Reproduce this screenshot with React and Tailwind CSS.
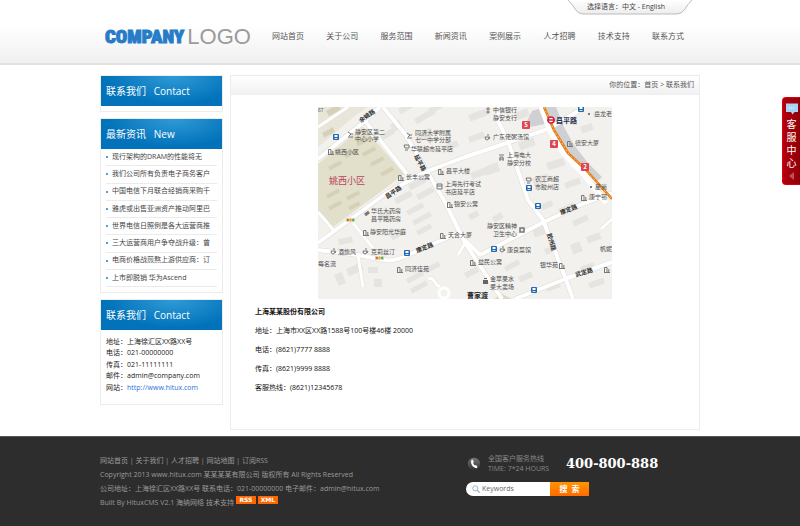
import React from "react";

const NAV = ["网站首页", "关于公司", "服务范围", "新闻资讯", "案例展示", "人才招聘", "技术支持", "联系方式"];

const NEWS = [
  "现行架构的DRAM的性能将无",
  "我们公司所有负责电子商务客户",
  "中国电信下月联合经销商采购千",
  "雅虎或出售亚洲资产推动阿里巴",
  "世界电信日照例是各大运营商推",
  "三大运营商用户争夺战升级：曾",
  "电商价格战煎熬上游供应商：订",
  "上市即脱销 华为Ascend",
];

const ROADS = [
  "M0 52L47 14L62 0",
  "M65 0L87 27L127 95L147 136L184 192",
  "M47 14L89 67",
  "M0 136L59 93L67 87L107 65L147 50L230 22L262 3",
  "M180 0V14L190 34L210 93L225 113L247 170L255 192",
  "M0 143L40 148L66 153Q76 155 90 148L140 126",
  "M162 148L224 116L262 98L294 86",
  "M197 192L247 172L294 155",
  "M140 126L162 148",
];

const LANES = [
  "M35 116L55 141",
  "M40 148L45 180",
  "M0 105L17 125",
  "M110 172Q114 170 116 174T122 180",
  "M147 136L140 148",
  "M0 20L30 0",
  "M250 47L294 92",
  "M283 122L294 112",
];

/* x, y, width, height, rotation */
const BLOCKS = [
  [80, 2, 20, 6, -30], [96, 12, 22, 6, -30], [110, 2, 18, 6, -30], [62, 28, 14, 6, -30],
  [98, 28, 16, 8, -28], [72, 18, 10, 8, -30], [124, 40, 16, 6, -25], [150, 8, 18, 7, -20],
  [150, 30, 16, 6, -20], [196, 6, 14, 8, -20], [166, 60, 14, 9, -20], [200, 36, 16, 8, -20],
  [228, 56, 18, 8, -18], [214, 72, 16, 8, -20], [246, 76, 16, 6, -20], [262, 20, 12, 7, -20],
  [90, 78, 18, 6, -28], [98, 88, 18, 6, -28], [76, 92, 18, 6, -28], [152, 66, 16, 7, -20],
  [60, 108, 12, 6, -28], [88, 104, 18, 5, -28], [94, 114, 20, 5, -28], [98, 124, 16, 5, -28],
  [72, 128, 16, 6, -28], [20, 132, 14, 6, -10], [16, 168, 8, 12, -24], [28, 162, 16, 8, -24],
  [50, 160, 10, 6, 0], [56, 172, 8, 8, 0], [88, 172, 18, 5, -28], [106, 162, 16, 5, -28],
  [92, 182, 18, 5, -28], [150, 108, 10, 6, -28], [146, 166, 14, 6, -28], [186, 160, 16, 5, -28],
  [214, 122, 14, 9, -20], [240, 102, 16, 6, -24], [254, 114, 16, 6, -24], [252, 138, 10, 10, -20],
  [226, 142, 12, 6, -20], [222, 98, 12, 6, -24], [268, 130, 14, 7, -20], [262, 160, 14, 5, -20],
  [228, 180, 14, 5, -20], [270, 176, 16, 6, -20], [200, 170, 14, 6, -24], [174, 110, 10, 6, -28],
];

const ESTATES = [
  [10, 60, 14, 4], [26, 48, 14, 4], [38, 36, 12, 4], [44, 46, 14, 4], [52, 56, 14, 4],
  [8, 88, 14, 4], [28, 90, 14, 4], [62, 66, 14, 4], [10, 100, 14, 4], [30, 100, 12, 4], [8, 4, 14, 6], [4, 26, 12, 5],
];

const PLACES = [
  [37, 27, "静安区第二"], [37, 34, "中心小学"], [17, 47, "姚西小区"],
  [97, 28, "同济大学附属"], [97, 35, "七一中学分部"], [93, 44, "华联超市延平店"],
  [88, 72, "长丰公寓"], [128, 66, "昌平大楼"], [127, 79, "上海先行考试"], [127, 87, "书店延平店"],
  [175, 5, "中信银行"], [175, 13, "静安支行"], [175, 32, "广东佬粥汤馆"],
  [189, 50, "上海电大"], [189, 58, "静安分校"], [257, 38, "德安大厦"],
  [217, 74, "农工商超"], [217, 82, "市胶州店"], [276, 9, "岳龙老"], [277, 82, "星尚"], [271, 92, "康宁邨"],
  [53, 106, "华氏大药房"], [53, 114, "昌平路药房"], [52, 127, "静安阳光华庭"],
  [136, 99, "锦安公寓"], [130, 130, "天合大厦"], [20, 147, "酒旗风"], [53, 147, "克莉丝汀"],
  [87, 164, "同济佳苑"], [0, 159, "每名流"], [169, 121, "静安区精神"], [175, 129, "卫生中心"],
  [189, 145, "康良菜馆"], [160, 157, "益民公寓"], [222, 160, "银华苑"],
  [172, 174, "金苹果水"], [172, 182, "果大卖场"], [282, 144, "帆妮"],
];

const STREETS = [
  [43, 16, -36, "余姚路"], [69, 92, -34, "昌平路"], [99, 146, -22, "康定路"],
  [243, 108, -22, "康定路"], [258, 170, -17, "武定路"], [96, 49, 62, "延平路"], [229, 127, 74, "胶州路"],
];

const BUILDINGS = [
  [10, 43], [80, 69], [120, 63], [249, 35], [263, 89], [45, 124], [122, 127], [79, 161],
  [129, 96], [152, 154], [241, 157], [286, 161],
];
const SCHOOLS = [[30, 27], [89, 28]];
const CAFES = [[167, 30], [13, 144], [45, 144], [182, 142]];
const STOPS = [[15, 28], [260, 0], [208, 79], [217, 97], [86, 144], [173, 140], [213, 181]];
const EXITS = [[204, 15, "5"], [232, 34, "4"], [263, 57, "2"]];
const LIGHTS = [[28, 111], [57, 149]];

function CityMap() {
  return (
    <svg
      viewBox="0 0 294 192"
      className="mx-auto block w-[294px] max-w-full font-['Noto_Sans_CJK_SC',sans-serif]"
      role="img"
      aria-label="地图"
    >
      <rect width="294" height="192" fill="#f2f1ee" />
      <path d="M0 57L45 20L86 67L57 89L15 120L0 105Z" fill="#e2dfca" />
      <path d="M0 0H50L38 8L0 40Z" fill="#e8e6d8" />
      <path d="M176 192L184 187L194 192Z" fill="#ddd8bf" />
      {ESTATES.map(([x, y, w, h], i) => (
        <rect key={i} x={x} y={y} width={w} height={h} fill="#d5d1b8" transform={`rotate(-28 ${x} ${y})`} />
      ))}
      {BLOCKS.map(([x, y, w, h, r], i) => (
        <rect key={i} x={x} y={y} width={w} height={h} fill="#e5e4e1" transform={`rotate(${r} ${x} ${y})`} />
      ))}
      <path d="M208 16L214 4L226 0H238L246 20L256 38L270 56L284 70L274 79L260 62L246 42L232 16L212 20Z" fill="#cfd0d4" />
      <g fill="none" strokeLinejoin="round">
        {ROADS.map((d) => <path key={d} d={d} stroke="#dcdad6" strokeWidth="5" />)}
        {LANES.map((d) => <path key={d} d={d} stroke="#e2e0dc" strokeWidth="4" />)}
        {ROADS.map((d) => <path key={d} d={d} stroke="#fff" strokeWidth="4" />)}
        {LANES.map((d) => <path key={d} d={d} stroke="#fff" strokeWidth="3" />)}
        <circle cx="126" cy="186" r="5" stroke="#fff" strokeWidth="3" />
        <path d="M223 0L232 24L245 46L266 68L288 96" stroke="#fff" strokeWidth="5" />
        <path d="M226 0L236 23L250 46L268 63L294 92" stroke="#e87d16" strokeWidth="2.6" />
        <path d="M226 0L236 23L250 46L268 63L294 92" stroke="#f8c07c" strokeWidth="1" strokeDasharray="2 2" />
      </g>

      <g stroke="#777" fill="none" strokeWidth="1">
        {BUILDINGS.map(([x, y], i) => (
          <path key={i} d={`M${x + 0.5} ${y + 4.5}V${y - 0.5}H${x + 3}V${y + 4.5}M${x} ${y + 4.5}H${x + 6}M${x + 4.8} ${y + 1}V${y + 4}`} />
        ))}
        {SCHOOLS.map(([x, y], i) => (
          <path key={i} d={`M${x} ${y + 3}H${x + 5}M${x} ${y - 2}L${x + 3} ${y}L${x + 1} ${y + 2}M${x + 3} ${y}H${x + 5}`} />
        ))}
        {CAFES.map(([x, y], i) => (
          <path key={i} d={`M${x} ${y}H${x + 4}Q${x + 4} ${y + 3} ${x + 2} ${y + 3}T${x} ${y}M${x + 4} ${y}Q${x + 6} ${y} ${x + 4} ${y + 2}M${x + 2} ${y - 2}L${x + 4} ${y - 2}`} />
        ))}
        <path d="M86 38H91V41H87ZM87 43H90M208 71H213V74H209ZM209 76H212" />
        <path d="M119 77H124V82H119ZM119 79H124M168 2H172M170 0V7M168 5H172" />
        <path d="M181 48H186M182 54V50H185V54M181 52H186" />
        <path d="M47 108L51 105" strokeWidth="3" />
        <rect x="202" y="121" width="4" height="4" strokeWidth="1.5" />
      </g>
      <path d="M165 173H170V177H165ZM166 171H169V172H166Z" fill="#666" />
      <circle cx="271" cy="7" r="1" fill="#555" />
      <circle cx="273" cy="80" r="1" fill="#555" />

      <g fontSize="6" fill="#4c4c4c">
        {PLACES.map(([x, y, t]) => <text key={t} x={x} y={y}>{t}</text>)}
      </g>
      <g fontSize="6" fontWeight="700" fill="#2d2d2d">
        {STREETS.map(([x, y, r, t]) => (
          <text key={`${x}-${y}`} x={x} y={y} transform={`rotate(${r} ${x} ${y})`}>{t}</text>
        ))}
      </g>
      <text x="149" y="191" fontSize="7" fontWeight="700" fill="#222">曹家渡</text>
      <text x="11" y="77" fontSize="9" fill="#b8445a">姚西小区</text>
      <text x="238" y="16" fontSize="7" fontWeight="700" fill="#27304e">昌平路</text>
      <text x="0" y="5" fontSize="5" fill="#555">67</text>

      <circle cx="233" cy="13" r="3" fill="#fff" stroke="#d0213f" strokeWidth="1.5" />
      <path d="M229 13H237" stroke="#d0213f" strokeWidth="1.5" />
      {STOPS.map(([x, y], i) => (
        <g key={i}>
          <rect x={x} y={y - 1} width="6" height="6" rx="1" fill="#2468ae" />
          <rect x={x + 1.5} y={y} width="3" height="2" fill="#fff" />
          <rect x={x + 1.5} y={y + 3} width="3" height="1" fill="#cfe2f5" />
        </g>
      ))}
      {EXITS.map(([x, y, n]) => (
        <g key={n}>
          <rect x={x} y={y - 1} width="8" height="8" rx="1" fill="#dd4550" />
          <text x={x + 4} y={y + 5} textAnchor="middle" fontSize="6" fontWeight="700" fill="#fff">{n}</text>
        </g>
      ))}
      {LIGHTS.map(([x, y], i) => (
        <g key={i}>
          <rect x={x} y={y} width="9" height="4" fill="#dfe0c0" />
          <circle cx={x + 1.8} cy={y + 2} r="1.2" fill="#e4593f" />
          <circle cx={x + 4.5} cy={y + 2} r="1.2" fill="#eaa72e" />
          <circle cx={x + 7.2} cy={y + 2} r="1.2" fill="#59a846" />
        </g>
      ))}
    </svg>
  );
}

function Panel({ title, children }) {
  return (
    <section className="border border-[#ececec] bg-white">
      <h2 className="h-[30px] whitespace-pre bg-[#0273bb] bg-[radial-gradient(ellipse_at_60%_0%,#2f9ad6_0%,#0273bb_65%)] px-[5px] text-[10px] leading-[30px] text-white">
        {title}
      </h2>
      {children}
    </section>
  );
}

function Header() {
  return (
    <header className="border-b-2 border-[#e2e2e2] bg-linear-to-b from-white from-40% to-[#f0f0f0] pb-[7px]">
      <div className="mx-auto w-3/4">
        <div className="flex h-4 justify-end pr-2">
          <div className="relative w-[124px] pr-2 text-center leading-[14px] text-[#444]">
            <svg className="absolute inset-0 h-4 w-full" viewBox="0 0 124 16" aria-hidden="true">
              <defs>
                <linearGradient id="tab" x1="0" y1="0" x2="0" y2="1">
                  <stop offset="0" stopColor="#fff" />
                  <stop offset="1" stopColor="#ededed" />
                </linearGradient>
              </defs>
              <path d="M0 0Q5 5 7 9Q10 14 15 14H109Q114 14 117 9Q119 5 124 0" fill="url(#tab)" stroke="#bcbcbc" />
            </svg>
            <span className="relative">
              选择语言：<a href="#zh">中文</a> - <a href="#en">English</a>
            </span>
          </div>
        </div>
        <div className="flex h-10 items-center">
          <a href="#home" className="flex w-[172px] shrink-0 items-center gap-[3px] pt-[2px] pl-[5px] font-['Liberation_Sans',sans-serif] leading-6">
            <span className="font-['Impact','Roboto_Condensed','Liberation_Sans_Narrow',sans-serif] text-[19px] font-black text-[#277cc8] [-webkit-text-stroke:1px_#277cc8]">COMPANY</span>
            <span className="text-[22px] text-[#9b9b9b]">LOGO</span>
          </a>
          <nav className="flex flex-1 justify-between pr-4 text-[8px] text-[#555]">
            {NAV.map((n) => <a key={n} href="#nav">{n}</a>)}
          </nav>
        </div>
      </div>
    </header>
  );
}

function Sidebar() {
  return (
    <aside className="flex w-[123px] shrink-0 flex-col gap-[6px]">
      <Panel title="联系我们   Contact">
        <div className="h-[5px]" />
      </Panel>
      <Panel title="最新资讯   New">
        <ul className="mx-[5px] mb-[5px] grid h-[138px] grid-rows-8 text-[#444]">
          {NEWS.map((n) => (
            <li key={n} className="flex items-center gap-1 overflow-hidden whitespace-nowrap border-b border-[#ebebeb]">
              <span className="size-[2px] shrink-0 bg-[#4aa3e0]" />
              <a href="#news">{n}</a>
            </li>
          ))}
        </ul>
      </Panel>
      <Panel title="联系我们   Contact">
        <address className="mx-[5px] mt-[6px] mb-[10px] grid h-[58px] grid-rows-5 items-center not-italic text-[#222]">
          <p>地址：上海徐汇区XX路XX号</p>
          <p>电话：021-00000000</p>
          <p>传真：021-11111111</p>
          <p>邮件：admin@company.com</p>
          <p>网站：<a href="#site" className="text-[#2e6fd8]">http://www.hitux.com</a></p>
        </address>
      </Panel>
    </aside>
  );
}

function Content() {
  return (
    <main className="min-w-0 flex-1 border border-[#ececec] bg-white">
      <div className="border-b border-[#eee] bg-linear-to-b from-white to-[#f1f1f1] pr-[5px] text-right leading-[18px] text-[#555]">
        你的位置：<a href="#home">首页</a> &gt; <a href="#contact">联系我们</a>
      </div>
      <div className="px-6 pt-3">
        <CityMap />
        <div className="pt-[3px] pb-8 leading-[19px] text-[#111]">
          <p className="font-bold">上海某某股份有限公司</p>
          <p>地址：上海市XX区XX路1588号100号楼46楼 20000</p>
          <p>电话：(8621)7777 8888</p>
          <p>传真：(8621)9999 8888</p>
          <p>客服热线：(8621)12345678</p>
        </div>
      </div>
    </main>
  );
}

function Footer() {
  return (
    <footer className="flex-1 border-t border-[#555] bg-[#2d2d2d] text-[#999]">
      <div className="mx-auto flex w-3/4 pt-[17px]">
        <div className="flex-1 leading-[14px]">
          <p>
            <a href="#home">网站首页</a> | <a href="#about">关于我们</a> | <a href="#jobs">人才招聘</a> | <a href="#map">网站地图</a> | <a href="#rss">订阅RSS</a>
          </p>
          <p>Copyright 2013 www.hitux.com 某某某某有限公司 版权所有 All Rights Reserved</p>
          <p>公司地址：上海徐汇区XX路XX号 联系电话：021-00000000 电子邮件：admin@hitux.com</p>
          <p className="flex gap-[2px]">
            <span>Built By HituxCMS V2.1 海纳网络 技术支持</span>
            <a href="#rss" className="h-2 w-5 bg-[#ff6600] text-center font-['DejaVu_Sans',sans-serif] text-[6px] leading-2 font-bold text-white">RSS</a>
            <a href="#xml" className="h-2 w-5 bg-[#ff6600] text-center font-['DejaVu_Sans',sans-serif] text-[6px] leading-2 font-bold text-white">XML</a>
          </p>
        </div>
        <div className="w-[234px] shrink-0">
          <div className="flex items-center">
            <svg className="ml-[1px] size-[14px]" viewBox="0 0 14 14" aria-hidden="true">
              <defs>
                <linearGradient id="ball" x1="0" y1="0" x2="0" y2="1">
                  <stop offset="0" stopColor="#777" />
                  <stop offset="1" stopColor="#303030" />
                </linearGradient>
              </defs>
              <circle cx="7" cy="7" r="6.2" fill="url(#ball)" />
              <path d="M4.2 3.2L5.6 2.4L7 5L6 5.8Q6.4 7.6 8 8.6L9.2 8L10.6 10.2L9.2 11.2Q6.6 11 5 8.2Q3.6 5.4 4.2 3.2Z" fill="#fff" />
            </svg>
            <p className="ml-[7px] w-[78px] leading-[10px] text-[#888]">
              全国客户服务热线<br />TIME: 7*24 HOURS
            </p>
            <strong className="font-['Georgia','DejaVu_Serif',serif] text-[13px] leading-4 text-white">400-800-888</strong>
          </div>
          <form className="mt-2 flex h-[14px]" onSubmit={(e) => e.preventDefault()}>
            <label className="flex w-[84px] items-center gap-[2px] rounded-l-full bg-white pl-[6px]">
              <svg className="size-2 shrink-0" viewBox="0 0 8 8" fill="none" stroke="#9db7cc" aria-hidden="true">
                <circle cx="3.3" cy="3.3" r="2.6" />
                <path d="M5.2 5.2L7.6 7.6" strokeWidth="1.4" />
              </svg>
              <input type="text" aria-label="Keywords" defaultValue="Keywords" className="w-full min-w-0 bg-transparent text-[#666] outline-none" />
            </label>
            <button type="submit" className="w-[39px] whitespace-pre bg-linear-to-b from-[#ff9500] to-[#ff6a00] text-[8px] leading-[14px] font-bold text-white">
              搜  索
            </button>
          </form>
        </div>
      </div>
    </footer>
  );
}

function ServiceTab() {
  return (
    <button
      type="button"
      className="absolute top-[97px] right-0 flex h-[88px] w-[18px] flex-col items-center rounded-l-sm border border-r-0 border-[#d8000f] bg-linear-to-r from-[#b4000c] to-[#8f0008] pt-[5px] text-[10px] leading-[13px] text-white"
    >
      <svg className="mb-[3px] h-3 w-3 shrink-0" viewBox="0 0 12 12" aria-hidden="true">
        <path d="M0 0.5H12V9H8.5L6.5 11.5L5 9H0Z" fill="#a9d4f7" />
        <path d="M3 5H9" stroke="#fff" strokeDasharray="1 1" />
      </svg>
      <span>客</span>
      <span>服</span>
      <span>中</span>
      <span>心</span>
      <svg className="mt-[2px] h-2 w-[5px] shrink-0" viewBox="0 0 5 8" aria-hidden="true">
        <path d="M5 0V8L0 4Z" fill="#b5545a" />
      </svg>
    </button>
  );
}

export default function App() {
  return (
    <div
      lang="zh-CN"
      className="relative flex min-h-screen flex-col bg-white font-['Open_Sans','Noto_Sans_CJK_SC',sans-serif] text-[7px]"
    >
      <Header />
      <div className="mx-auto flex w-3/4 items-start gap-[7px] pt-[10px] pb-[6px]">
        <Sidebar />
        <Content />
      </div>
      <Footer />
      <ServiceTab />
    </div>
  );
}
